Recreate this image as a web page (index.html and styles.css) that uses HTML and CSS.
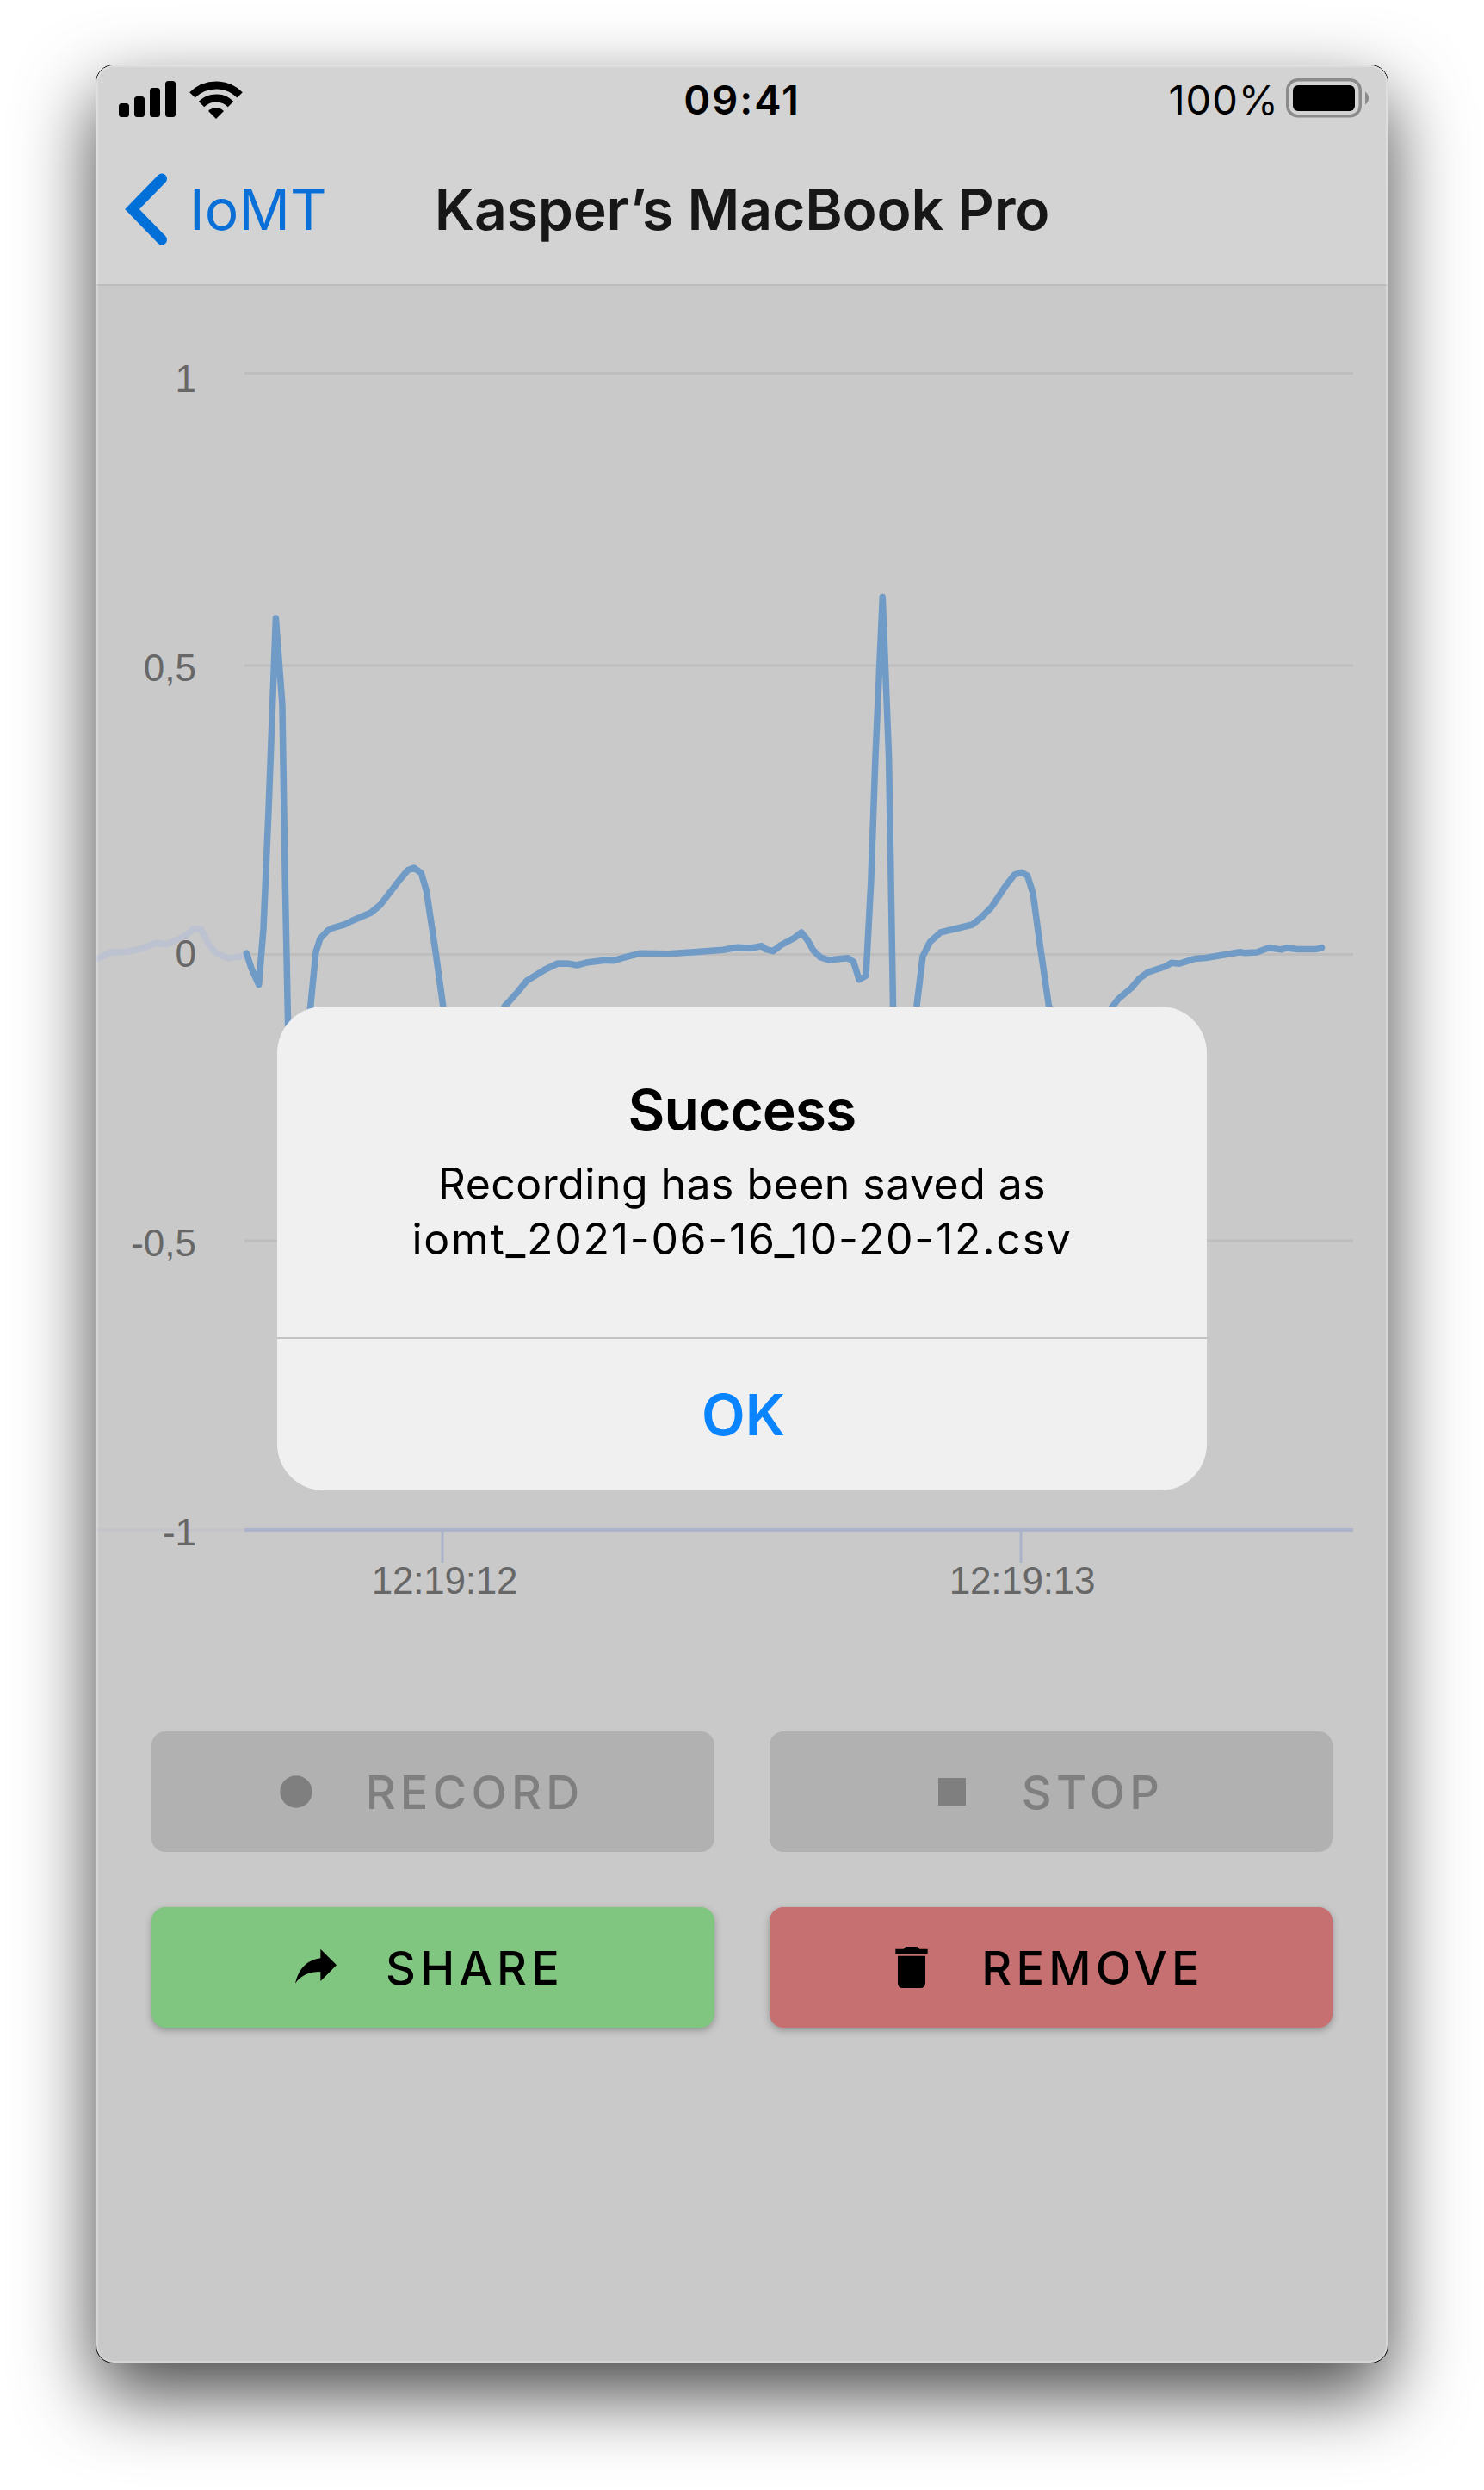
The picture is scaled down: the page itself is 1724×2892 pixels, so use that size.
FILE: index.html
```html
<!DOCTYPE html>
<html lang="en">
<head>
<meta charset="utf-8">
<title>IoMT</title>
<link rel="stylesheet" href="styles.css">
</head>
<body>
<main class="window">
  <header class="status">
    <svg class="signal" width="144" height="46" viewBox="0 0 144 46">
      <rect x="0" y="28" width="12" height="16" rx="3.5"/>
      <rect x="18" y="20" width="12" height="24" rx="3.5"/>
      <rect x="36" y="10" width="12" height="34" rx="3.5"/>
      <rect x="54" y="2" width="12" height="42" rx="3.5"/>
      <g transform="translate(113 46)">
        <path class="wave" d="M-27.6-27.6A39 39 0 0 1 27.6-27.6M-17-17A24 24 0 0 1 17-17"/>
        <path d="M0 0L-9-9A12.7 12.7 0 0 1 9-9Z"/>
      </g>
    </svg>
    <span class="clock">09:41</span>
    <span class="power">
      <span class="percent">100%</span>
      <svg width="98" height="46" viewBox="0 0 98 46">
        <rect class="shell" x="1.75" y="1.75" width="84.5" height="42" rx="12"/>
        <rect x="8" y="8" width="72" height="30" rx="6"/>
        <path class="nub" d="M92 15.500Q96 18 96 23T92 30.500Z"/>
      </svg>
    </span>
  </header>
  <nav class="navbar">
    <a class="back">
      <svg width="56" height="90" viewBox="0 0 56 90"><path d="M45 9.500L10.500 45L45 80.500"/></svg>
      <span>IoMT</span>
    </a>
    <h1>Kasper’s MacBook Pro</h1>
  </nav>
  <svg class="chart" width="1500" height="1679" viewBox="112 332 1500 1679">
    <g class="grid">
      <path d="M284 433.500H1572M284 773H1572M284 1108.500H1572M284 1441H1572"/>
    </g>
    <path class="axis" d="M284 1777H1572"/>
    <path class="tick" d="M514 1777V1815M1186 1777V1815"/>
    <path class="axis past" d="M112 1777H284"/>
    <path class="trace past" d="M108 1116L114 1113L129 1106L147 1105.400L167 1101L181 1095L193.600 1096.600L215 1087.400L225 1078.600L233.600 1079.400L242 1096L251 1107L265 1113L284 1110"/>
    <path class="trace" d="M286.400 1107L292 1124.500L300.700 1143.700L306 1078.600L312 941L320.400 718L327.900 818L331.400 1032.700L334.600 1189.600L342 1400L360.400 1172L367 1105.400L372 1090L381 1080.500L386 1078L400.700 1073.600L410 1069L431 1060L441.800 1051L465 1021L474 1010.500L481 1008L489.300 1014L495.400 1034.600L506 1105.400L515 1170.500L550 1230L586.500 1168.500L601.700 1151.700L611.700 1139.300L633.300 1126L648 1119L661.700 1119.300L670 1121L683 1117.700L703 1115.300L713 1115.700L726.700 1111.700L743 1107.300L776.700 1107.700L806.700 1105.700L840 1103.300L856.700 1100.300L871.700 1101.300L885 1098.700L890 1102.700L898 1104.700L906.700 1098L923 1089.300L931 1083L938 1091.700L945 1104L953 1111.700L963 1115L985 1112.700L991.700 1117.300L998 1137.700L1006 1133.300L1011.800 1025L1017 878.600L1025.300 693.600L1032.600 878.600L1037.500 1168L1044 1400L1065 1168L1072 1110.700L1080.400 1094L1092.600 1082.900L1113 1078L1129.400 1074L1139.600 1066L1151.800 1053.600L1168 1029.300L1178.400 1016L1186.500 1013.200L1193.500 1017L1200 1037.500L1208 1096.400L1218.400 1168L1250 1230L1292.700 1168.600L1298.800 1160.700L1314.300 1147.500L1323.300 1136.800L1333.500 1129.300L1353.900 1122.500L1361 1118.200L1370 1119.300L1387.800 1113.600L1401 1112.500L1440.800 1105.700L1446 1106.800L1460 1106L1474.300 1100.700L1488.600 1102.900L1494.700 1100.700L1507 1102.500L1529 1102.500L1535.500 1100.700"/>
    <g class="labels y-labels">
      <text x="228" y="455">1</text>
      <text x="228" y="790.500">0,5</text>
      <text x="228" y="1123">0</text>
      <text x="228" y="1459">-0,5</text>
      <text x="228" y="1794.500">-1</text>
    </g>
    <g class="labels x-labels">
      <text x="516.500" y="1851">12:19:12</text>
      <text x="1187.500" y="1851">12:19:13</text>
    </g>
  </svg>
  <section class="actions">
    <button class="btn disabled">
      <svg viewBox="0 0 24 24"><circle cx="12" cy="12" r="7"/></svg><span>RECORD</span>
    </button>
    <button class="btn disabled">
      <svg viewBox="0 0 24 24"><path d="M18 18H6V6H18V18Z"/></svg><span>STOP</span>
    </button>
    <button class="btn share">
      <svg viewBox="0 0 24 24"><path d="M21 11L14 4V8C7 9 4 14 3 19C5.500 15.500 9 13.900 14 13.900V18L21 11Z"/></svg><span>SHARE</span>
    </button>
    <button class="btn remove">
      <svg viewBox="0 0 24 24"><path d="M19 4H15.500L14.500 3H9.500L8.500 4H5V6H19M6 19A2 2 0 0 0 8 21H16A2 2 0 0 0 18 19V7H6V19Z"/></svg><span>REMOVE</span>
    </button>
  </section>
  <div class="alert" role="alertdialog">
    <div class="alert-body">
      <h2>Success</h2>
      <p><span class="line">Recording has been saved as</span><span class="line file">iomt_2021-06-16_10-20-12.csv</span></p>
    </div>
    <button class="ok">OK</button>
  </div>
</main>
</body>
</html>
```
FILE: styles.css
```css
* { box-sizing: border-box; }

body {
  margin: 0;
  height: 2892px;
  padding-top: 75px;
  background: #fff;
  font-family: Inter, "Liberation Sans", sans-serif;
  overflow: hidden;
}

h1, h2, p { margin: 0; }
button { font: inherit; border: 0; padding: 0; }

.window {
  position: relative;
  display: flex;
  flex-direction: column;
  width: 1502px;
  height: 2670px;
  margin: 0 auto;
  border: 1px solid #000;
  border-radius: 21px;
  background: #c9c9c9;
  box-shadow: 0 36px 88px rgba(0, 0, 0, .72);
  overflow: hidden;
}

.window::after {
  content: "";
  position: absolute;
  inset: 0;
  border: 2px solid rgba(255, 255, 255, .25);
  border-radius: 20px;
  pointer-events: none;
}

.status {
  display: grid;
  grid-template-columns: 1fr auto 1fr;
  align-items: center;
  height: 80px;
  padding: 0 26px;
  background: #d3d3d3;
  font-size: 47px;
  line-height: 80px;
}

.signal { margin-bottom: 3px; }
.wave { fill: none; stroke: #000; stroke-width: 9; }
.clock { font-weight: 600; letter-spacing: 2px; }
.percent { letter-spacing: 1px; }

.power {
  display: flex;
  justify-content: flex-end;
  align-items: center;
  gap: 8px;
  margin-right: -6px;
}

.power svg { margin-bottom: 4px; }
.shell { fill: none; stroke: #8b8b8b; stroke-width: 3.5; }
.nub { fill: #8b8b8b; }

.navbar {
  display: grid;
  grid-template-columns: 388px 1fr 388px;
  align-items: center;
  height: 176px;
  padding-bottom: 2px;
  background: #d3d3d3;
  box-shadow: inset 0 -2px 0 #bcbcbc;
}

.back {
  display: flex;
  align-items: center;
  gap: 21px;
  padding-left: 31px;
  color: #0a70d8;
  font-size: 66px;
}

.back path { fill: none; stroke: #0070d8; stroke-width: 12; stroke-linecap: round; }

.navbar h1 {
  font-size: 66px;
  font-weight: 600;
  letter-spacing: -.2px;
  color: #171717;
  text-align: center;
  white-space: nowrap;
}

.chart { display: block; flex: none; }
.grid path { fill: none; stroke: #bdbdbd; stroke-width: 3; }
.axis { stroke: #aab3c9; stroke-width: 4; }
.axis.past { stroke: #c3c4ca; stroke-width: 3; }
.tick { stroke: #aab3c9; stroke-width: 3; }

.trace {
  fill: none;
  stroke: #6f9bc6;
  stroke-width: 7.5;
  stroke-linecap: round;
  stroke-linejoin: round;
}

.trace.past { stroke: #bcc2cf; stroke-linecap: butt; }
.labels { font: 44px "Liberation Sans", sans-serif; fill: #676767; }
.y-labels { text-anchor: end; }
.x-labels { text-anchor: middle; letter-spacing: -.2px; }

.actions {
  display: grid;
  grid-template-columns: 654px 654px;
  grid-auto-rows: 140px;
  justify-content: center;
  gap: 64px;
}

.btn {
  display: flex;
  justify-content: center;
  align-items: center;
  gap: 49px;
  padding-right: 16px;
  border-radius: 16px;
  font-size: 54px;
  font-weight: 500;
  letter-spacing: 5.2px;
  color: #000;
  box-shadow: 0 3px 8px rgba(0, 0, 0, .28);
}

.btn svg { width: 64px; height: 64px; fill: currentColor; }
.disabled { background: #b1b1b1; color: #7f7f7f; box-shadow: none; }
.share { background: #80c580; }
.remove { background: #c77072; }

.alert {
  position: absolute;
  left: 210px;
  top: 1093px;
  width: 1080px;
  height: 562px;
  border-radius: 54px;
  background: #f0f0f1;
  overflow: hidden;
  text-align: center;
}

.alert-body { height: 386px; padding-top: 79px; border-bottom: 2px solid #c2c2c3; }
.alert h2 { font-size: 66px; line-height: 82px; font-weight: 600; letter-spacing: -1px; }
.alert p { margin-top: 13px; font-size: 50px; line-height: 64px; }
.line { display: block; white-space: nowrap; letter-spacing: .46px; }
.file { letter-spacing: 1.7px; }

.ok {
  width: 100%;
  height: 176px;
  padding-left: 3px;
  background: none;
  color: #0a84ff;
  font-size: 66px;
  font-weight: 600;
}
```
